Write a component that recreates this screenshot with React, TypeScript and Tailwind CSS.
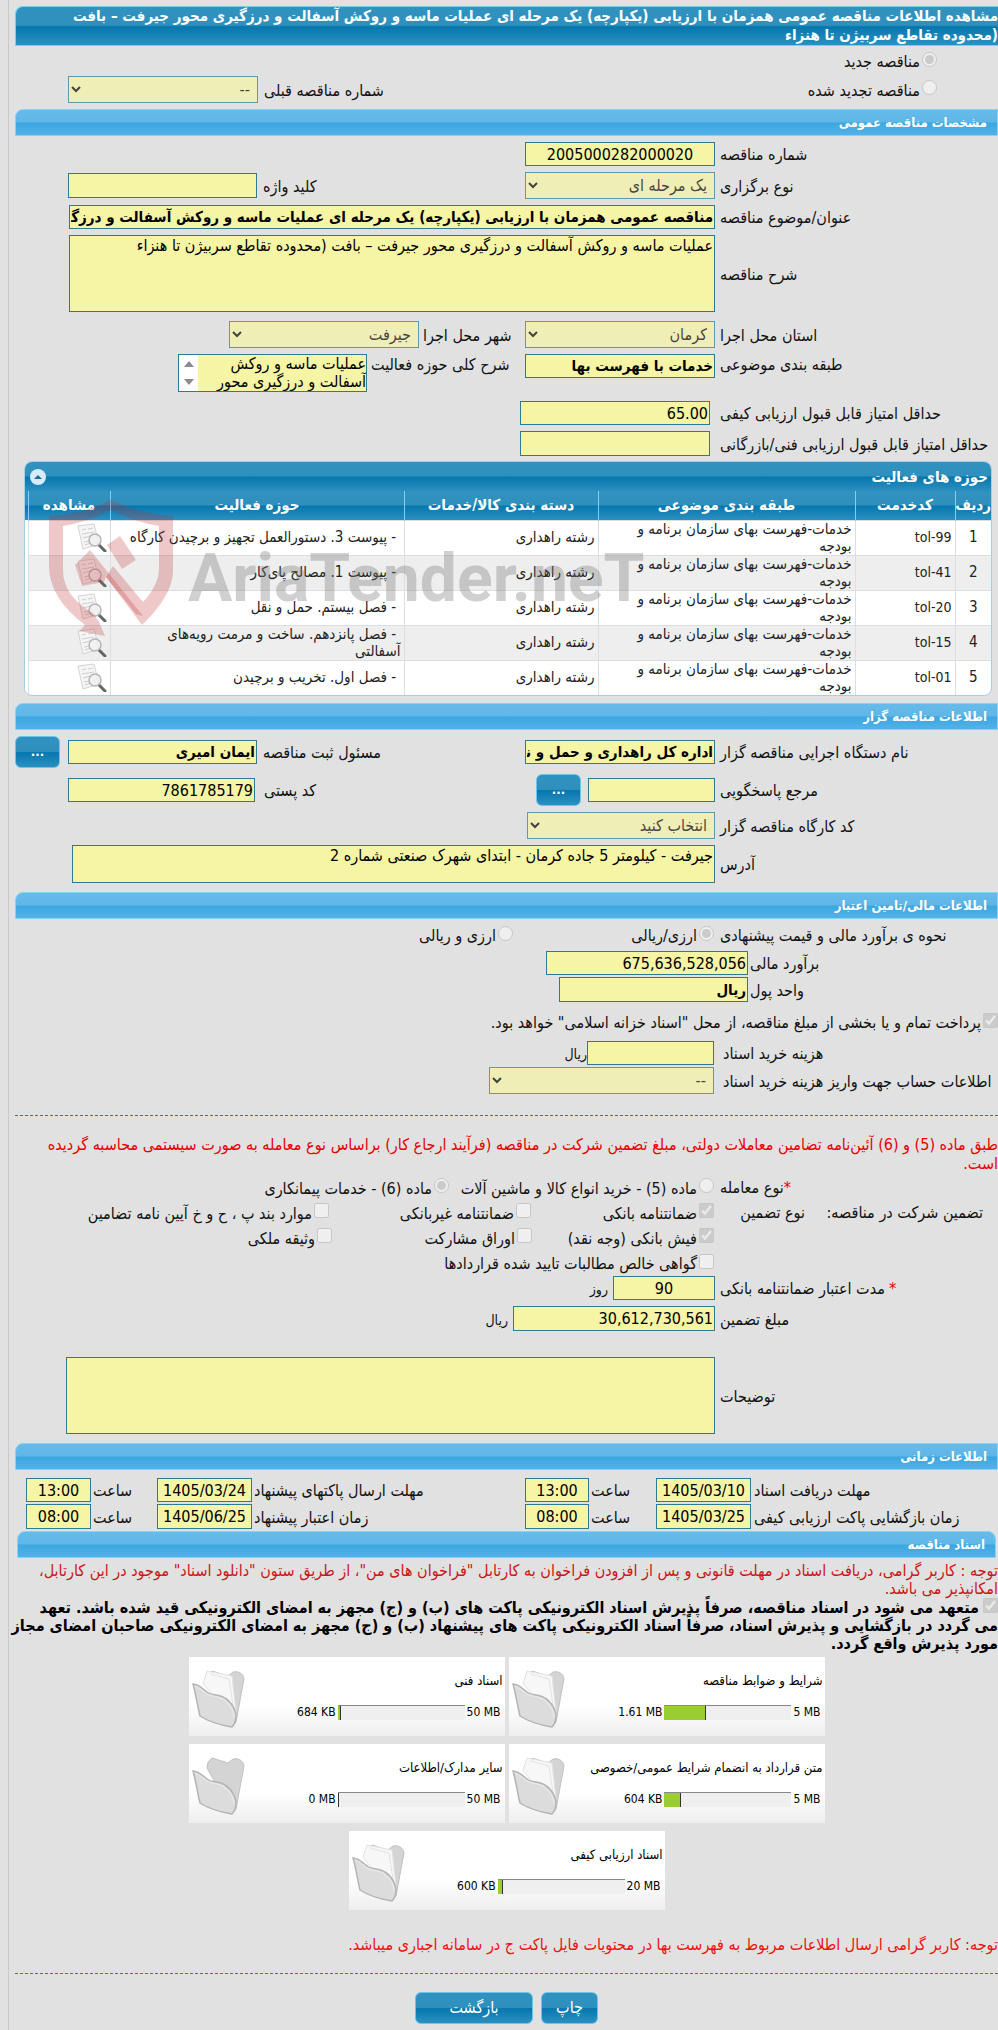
import type { ReactNode } from "react";

const fieldBox = "shrink-0 rounded-none border border-[#2c7a94] bg-[#f6f4a5] px-px leading-[20px] text-black outline-none";

const activities = [
  { code: "tol-99", title: "پیوست 3. دستورالعمل تجهیز و برچیدن کارگاه" },
  { code: "tol-41", title: "پیوست 1. مصالح پای‌کار" },
  { code: "tol-20", title: "فصل بیستم. حمل و نقل" },
  { code: "tol-15", title: "فصل پانزدهم. ساخت و مرمت رویه‌های آسفالتی" },
  { code: "tol-01", title: "فصل اول. تخریب و برچیدن" },
];

const documents = [
  { title: "شرایط و ضوابط مناقصه", used: "1.61 MB", max: "5 MB", percent: 33 },
  { title: "اسناد فنی", used: "684 KB", max: "50 MB", percent: 3 },
  { title: "متن قرارداد به انضمام شرایط عمومی/خصوصی", used: "604 KB", max: "5 MB", percent: 13 },
  { title: "سایر مدارک/اطلاعات", used: "0 MB", max: "50 MB", percent: 0 },
  { title: "اسناد ارزیابی کیفی", used: "600 KB", max: "20 MB", percent: 4 },
];

function SectionHeader({ children, className = "" }: { children: ReactNode; className?: string }) {
  return (
    <h2
      className={`h-[27px] rounded-tl-lg border border-[#86d3f5] bg-[linear-gradient(#66bbea,#5fb6e7_48%,#3ca6e0_52%,#52b2e8)] pr-[10px] text-[13px] font-bold leading-[25px] text-white ${className}`}
    >
      {children}
    </h2>
  );
}

/* Labels sit against their field, so the text is pushed to the left end */
function Label({ id, children, className = "w-[283px] pl-[5px]" }: { id: string; children: ReactNode; className?: string }) {
  return (
    <label htmlFor={id} className={`flex shrink-0 justify-end whitespace-nowrap pt-[2px] ${className}`}>
      {children}
    </label>
  );
}

function Text({ id, value = "", bold = false, className = "" }: { id: string; value?: string; bold?: boolean; className?: string }) {
  return (
    <input
      id={id}
      type="text"
      readOnly
      defaultValue={value}
      className={`${fieldBox} ${bold ? "text-[15px] font-bold" : "text-[16px]"} ${className}`}
    />
  );
}

function Select({ id, value, className = "" }: { id: string; value: string; className?: string }) {
  return (
    <select
      id={id}
      disabled
      className={`h-[27px] shrink-0 rounded-none border border-[#2c7a94] bg-[#f6f4a5] px-[3px] text-[16px] text-black opacity-70 ${className}`}
    >
      <option>{value}</option>
    </select>
  );
}

function Choice({
  type,
  name,
  label,
  checked = false,
  className = "",
}: {
  type: "radio" | "checkbox";
  name: string;
  label: string;
  checked?: boolean;
  className?: string;
}) {
  return (
    <label className={`flex shrink-0 items-center gap-[2px] whitespace-nowrap pt-[2px] ${className}`}>
      <input type={type} name={name} defaultChecked={checked} disabled className="mb-[6px] size-[15px] shrink-0" />
      {label}
    </label>
  );
}

function DotsButton({ label, className = "" }: { label: string; className?: string }) {
  return (
    <button
      type="button"
      aria-label={label}
      className={`h-[32px] w-[45px] shrink-0 rounded-md border border-[#6cc4ec] bg-[linear-gradient(#3292bf,#3090bd_48%,#0577ae_52%,#2c90c0)] text-[13px] font-bold text-white ${className}`}
    >
      ...
    </button>
  );
}

function ViewIcon() {
  return (
    <svg viewBox="0 0 30 29" className="h-[29px] w-[30px]">
      <path d="M1 3 17 1l5 20-16 5Z" fill="#f5f5f5" stroke="#d4d4d4" />
      <path d="m5 7 4-1m2 0 5-1M5 11l12-2M6 15l7-2M7 19l5-1M8 22l6-2" stroke="#cfcfcf" strokeWidth="1.2" />
      <path d="m22 22 6 6" stroke="#666" strokeWidth="3" strokeLinecap="round" />
      <circle cx="18" cy="17" r="6" fill="#f0f0f0" fillOpacity=".8" stroke="#b5b5b5" strokeWidth="1.5" />
    </svg>
  );
}

function FolderIcon({ empty }: { empty: boolean }) {
  return (
    <svg viewBox="0 0 54 60" className="h-[60px] w-[54px]">
      <path d="m15 12 1-6 4-4 16 5 5-4c5-1 10 1 11 7L44 53l-4 4Z" fill="#d4d4d4" stroke="#c2c2c2" />
      {!empty && (
        <>
          <path d="m11 14 4-12 25 5 4 36-6 6Z" fill="#f7f7f7" stroke="#e2e2e2" />
          <path d="m18 5 19 5 5 33" fill="none" stroke="#e3e3e3" />
        </>
      )}
      <path
        d="M1 15c5 0 9 4 14 8 5 4 12 2 18 6 8 5 11 14 11 18 0 4-1 8-4 11-12-2-23-5-32-11C5 35 4 25 1 15Z"
        fill="#dcdcdc"
        stroke="#b4b4b4"
        strokeWidth="1.5"
      />
      <path d="M3 17c5 2 8 5 12 8 5 3 12 2 17 6 7 5 10 12 10 17" fill="none" stroke="#ededed" />
    </svg>
  );
}

function Watermark() {
  return (
    <div className="pointer-events-none absolute left-[24px] top-[38px]" dir="ltr" aria-hidden="true">
      <svg viewBox="0 0 610 140" className="h-[140px] w-[610px]">
        <g fill="#c1272d" fillOpacity=".25">
          <path
            fillRule="evenodd"
            d="M0 16Q34 14 62 0 90 14 124 16V72Q123 96 93 125L57 77 64 66 94 102Q110 85 110 68V26Q86 22 62 10 38 22 14 26V70Q14 96 44 113L50 122 56 136 30 131 36 125Q0 98 0 66Z"
          />
          <path d="m58 45 13-9 16 24-14 9Z" />
          <path d="m41 50 53 66-7-2-30-37-2 5-22 4-7-21Z" />
        </g>
        <text x="139" y="101" fontFamily="Roboto" fontWeight="700" fontSize="66" fill="#777" fillOpacity=".35">
          AriaTender.neT
        </text>
      </svg>
    </div>
  );
}

function ActivityTable() {
  const head = "border-l border-[#7fd0f5] p-0 text-[15px] font-bold";
  const cell = "border-l border-t border-[#d9dfe2] px-[3px] py-0";
  return (
    <div className="relative ml-[9px] mr-[6px] mt-[5px] overflow-hidden rounded-lg border border-[#a5cfe4] bg-white">
      <div className="flex h-[29px] items-center justify-between bg-[linear-gradient(#3292bf,#3090bd_48%,#0577ae_52%,#2c90c0)] pl-[5px] pr-[3px] text-[15px] font-bold text-white">
        <h3>حوزه های فعالیت</h3>
        <button type="button" aria-label="بستن" className="flex size-[16px] items-center justify-center rounded-full bg-[#d8ebfa]">
          <svg viewBox="0 0 8 4" className="h-1 w-2">
            <path d="M0 4 4 0l4 4Z" fill="#1b6c9c" />
          </svg>
        </button>
      </div>
      <table className="w-full table-fixed border-collapse text-[15px] leading-[17px] text-[#222]">
        <thead>
          <tr className="h-[29px] bg-[linear-gradient(#3292bf,#3090bd_48%,#0577ae_52%,#2c90c0)] text-white">
            <th className={`w-[36px] ${head}`}>ردیف</th>
            <th className={`w-[100px] ${head}`}>کدخدمت</th>
            <th className={`w-[257px] ${head}`}>طبقه بندی موضوعی</th>
            <th className={`w-[194px] ${head}`}>دسته بندی کالا/خدمات</th>
            <th className={head}>حوزه فعالیت</th>
            <th className={`w-[82px] ${head}`}>مشاهده</th>
            <th className="w-[3px] p-0" />
          </tr>
        </thead>
        <tbody>
          {activities.map((row, i) => (
            <tr key={row.code} className="h-[35px] even:bg-[#eee]">
              <td className={`text-center ${cell}`}>{i + 1}</td>
              <td className={`text-right text-[14px] ${cell}`}>
                <bdi>{row.code}</bdi>
              </td>
              <td className={`whitespace-nowrap ${cell}`}>
                خدمات-فهرست بهای سازمان برنامه و
                <br />
                بودجه
              </td>
              <td className={cell}>رشته راهداری</td>
              <td className="border-l border-t border-[#d9dfe2] py-0 pl-[12px] pr-[3px]">
                {"\u00a0- "}
                {row.title}
              </td>
              <td className={cell}>
                <ViewIcon />
              </td>
              <td className="bg-white p-0" />
            </tr>
          ))}
        </tbody>
      </table>
      <Watermark />
    </div>
  );
}

function DocumentCard({ title, used, max, percent }: (typeof documents)[number]) {
  return (
    <div className="flex h-[79px] w-[316px] bg-[linear-gradient(#fff_60%,#eee)]">
      <div className="flex flex-1 flex-col pr-[2px] pt-[14px] text-black">
        <p className="whitespace-nowrap text-[13px] leading-[20px]">{title}</p>
        <div className="mt-[12px] flex items-center gap-[2px] pr-[2px] text-[12px] leading-[18px]">
          <bdi>{max}</bdi>
          <div className="h-[15px] w-[127px] border-t border-[#888] bg-[#efefef]" dir="ltr">
            <div className="h-full border-r border-[#333] bg-[#9acd32]" style={{ width: `${percent}%` }} />
          </div>
          <bdi>{used}</bdi>
        </div>
      </div>
      <div className="pl-[3px] pt-[12px]">
        <FolderIcon empty={percent === 0} />
      </div>
    </div>
  );
}

export default function App() {
  return (
    <div dir="rtl" lang="fa" className="overflow-hidden bg-[#e1e1e1] font-['DejaVu_Sans_Condensed','DejaVu_Sans',sans-serif] text-[16px] leading-[18px] text-[#111]">
      <main className="ml-2 border-l border-[#c9c9c9] pb-[6px] pl-[6px] pt-[6px]">
        <h1 className="h-[40px] whitespace-nowrap rounded-tl-lg border border-r-0 border-[#7ccdf0] bg-[linear-gradient(#3292bf,#3090bd_48%,#0577ae_52%,#2c90c0)] text-[15px] font-bold leading-[19px] text-white">
          مشاهده اطلاعات مناقصه عمومی همزمان با ارزیابی (یکپارچه) یک مرحله ای عملیات ماسه و روکش آسفالت و درزگیری محور جیرفت – بافت
          <br />
          (محدوده تقاطع سربیژن تا هنزاء
        </h1>

        <div className="flex h-[30px] items-center pr-[61px]">
          <Choice type="radio" name="kind" label="مناقصه جدید" checked />
        </div>
        <div className="flex h-[27px] items-center pr-[61px]">
          <Choice type="radio" name="kind" label="مناقصه تجدید شده" className="w-[412px]" />
          <Label id="previous" className="w-[267px] pl-[6px]">شماره مناقصه قبلی</Label>
          <Select id="previous" value="--" className="w-[190px]" />
        </div>

        <SectionHeader className="mt-[6px]">مشخصات مناقصه عمومی</SectionHeader>
        <div className="mt-[6px] flex items-center">
          <Label id="number">شماره مناقصه</Label>
          <Text id="number" value="2005000282000020" className="h-[24px] w-[190px] text-center" />
        </div>
        <div className="mt-[6px] flex items-center">
          <Label id="stage">نوع برگزاری</Label>
          <Select id="stage" value="یک مرحله ای" className="w-[190px]" />
          <Label id="keyword" className="w-[268px] pl-[6px]">کلید واژه</Label>
          <Text id="keyword" className="h-[25px] w-[189px]" />
        </div>
        <div className="mt-[6px] flex items-center">
          <Label id="subject">عنوان/موضوع مناقصه</Label>
          <Text
            id="subject"
            bold
            value="مناقصه عمومی همزمان با ارزیابی (یکپارچه) یک مرحله ای عملیات ماسه و روکش آسفالت و درزگیری محور جیرفت"
            className="h-[24px] w-[646px]"
          />
        </div>
        <div className="mt-[6px] flex items-center">
          <Label id="description">شرح مناقصه</Label>
          <textarea
            id="description"
            readOnly
            defaultValue="عملیات ماسه و روکش آسفالت و درزگیری محور جیرفت – بافت (محدوده تقاطع سربیژن تا هنزاء"
            className={`h-[77px] w-[646px] resize-none ${fieldBox}`}
          />
        </div>
        <div className="mt-[9px] flex items-center">
          <Label id="province">استان محل اجرا</Label>
          <Select id="province" value="کرمان" className="w-[190px]" />
          <Label id="city" className="w-[106px] pl-[4px]">شهر محل اجرا</Label>
          <Select id="city" value="جیرفت" className="w-[190px]" />
        </div>
        <div className="mt-[6px] flex items-start">
          <Label id="category">طبقه بندی موضوعی</Label>
          <Text id="category" bold value="خدمات با فهرست بها" className="h-[24px] w-[190px]" />
          <Label id="scope" className="w-[158px] pl-[4px]">شرح کلی حوزه فعالیت</Label>
          <div className="flex h-[38px] w-[189px] border border-[#2c7a94] bg-[#f6f4a5]">
            <textarea
              id="scope"
              readOnly
              defaultValue="عملیات ماسه و روکش آسفالت و درزگیری محور جیرفت – بافت"
              className="h-full min-w-0 flex-1 resize-none overflow-hidden leading-[18px] text-black outline-none"
            />
            <div className="flex w-[19px] flex-col items-center justify-between bg-white py-[6px]">
              <svg viewBox="0 0 10 6" className="h-[6px] w-[10px]">
                <path d="M0 6 5 0l5 6Z" fill="#8b8b8b" />
              </svg>
              <svg viewBox="0 0 10 6" className="h-[6px] w-[10px]">
                <path d="M0 0h10L5 6Z" fill="#8b8b8b" />
              </svg>
            </div>
          </div>
        </div>
        <div className="mt-[9px] flex items-center">
          <Label id="quality" className="w-[288px] pl-[10px]">حداقل امتیاز قابل قبول ارزیابی کیفی</Label>
          <Text id="quality" value="65.00" className="h-[24px] w-[190px]" />
        </div>
        <div className="mt-[6px] flex items-center">
          <Label id="technical" className="w-[288px] pl-[10px]">حداقل امتیاز قابل قبول ارزیابی فنی/بازرگانی</Label>
          <Text id="technical" className="h-[25px] w-[190px]" />
        </div>

        <ActivityTable />

        <SectionHeader className="mt-[7px]">اطلاعات مناقصه گزار</SectionHeader>
        <div className="mt-[6px] flex items-center">
          <Label id="agency">نام دستگاه اجرایی مناقصه گزار</Label>
          <Text id="agency" bold value="اداره کل راهداری و حمل و نقل جاده ای جنوب کرمان" className="h-[24px] w-[190px]" />
          <Label id="registrar" className="w-[268px] pl-[6px]">مسئول ثبت مناقصه</Label>
          <Text id="registrar" bold value="ایمان امیری" className="h-[24px] w-[189px]" />
          <DotsButton label="انتخاب مسئول" className="mr-[8px]" />
        </div>
        <div className="mt-[6px] flex items-center">
          <Label id="authority">مرجع پاسخگویی</Label>
          <Text id="authority" className="h-[24px] w-[127px]" />
          <DotsButton label="انتخاب مرجع" className="mr-[7px]" />
          <Label id="postal" className="w-[281px] pl-[9px]">کد پستی</Label>
          <Text id="postal" value="7861785179" className="h-[24px] w-[187px]" />
        </div>
        <div className="mt-[6px] flex items-center">
          <Label id="workshop">کد کارگاه مناقصه گزار</Label>
          <Select id="workshop" value="انتخاب کنید" className="w-[188px]" />
        </div>
        <div className="mt-[6px] flex items-center">
          <Label id="address">آدرس</Label>
          <textarea
            id="address"
            readOnly
            defaultValue="جیرفت - کیلومتر 5 جاده کرمان - ابتدای شهرک صنعتی شماره 2"
            className={`h-[38px] w-[643px] resize-none ${fieldBox}`}
          />
        </div>

        <SectionHeader className="mt-[9px]">اطلاعات مالی/تامین اعتبار</SectionHeader>
        <div className="flex h-[32px] items-center">
          <span className="flex w-[284px] shrink-0 justify-end whitespace-nowrap pl-[6px] pt-[2px]">نحوه ی برآورد مالی و قیمت پیشنهادی</span>
          <Choice type="radio" name="currency" label="ارزی/ریالی" checked className="w-[201px]" />
          <Choice type="radio" name="currency" label="ارزی و ریالی" />
        </div>
        <div className="flex items-center">
          <Label id="estimate" className="w-[250px] pl-[2px]">برآورد مالی</Label>
          <Text id="estimate" value="675,636,528,056" className="h-[24px] w-[202px]" />
        </div>
        <div className="mt-[2px] flex items-center">
          <Label id="unit" className="w-[250px] pl-[2px]">واحد پول</Label>
          <Text id="unit" bold value="ریال" className="h-[25px] w-[189px]" />
        </div>
        <div className="mt-[10px] flex h-[20px] items-center">
          <Choice type="checkbox" name="treasury" label={'پرداخت تمام و یا بخشی از مبلغ مناقصه، از محل "اسناد خزانه اسلامی" خواهد بود.'} checked />
        </div>
        <div className="mt-[9px] flex items-center">
          <Label id="fee" className="w-[284px] pl-[9px]">هزینه خرید اسناد</Label>
          <Text id="fee" className="h-[24px] w-[127px]" />
          <span className="pt-[2px] text-[14px]">ریال</span>
        </div>
        <div className="mt-[2px] flex items-center">
          <Label id="account" className="w-[284px] pl-[9px]">اطلاعات حساب جهت واریز هزینه خرید اسناد</Label>
          <Select id="account" value="--" className="w-[225px]" />
        </div>

        <hr className="mt-[21px] border-dashed border-[#1d7cb0]" />
        <p className="mt-[19px] whitespace-nowrap leading-[19px] text-[#e60000]">
          طبق ماده (5) و (6) آئین‌نامه تضامین معاملات دولتی، مبلغ تضمین شرکت در مناقصه (فرآیند ارجاع کار) براساس نوع معامله به صورت سیستمی محاسبه گردیده
          <br />
          است.
        </p>
        <div className="mt-[2px] flex h-[25px] items-center">
          <span className="flex w-[284px] shrink-0 justify-end pl-[6px]">
            <span className="text-[#e60000]">*</span>نوع معامله
          </span>
          <Choice type="radio" name="deal" label="ماده (5) - خرید انواع کالا و ماشین آلات" className="w-[265px]" />
          <Choice type="radio" name="deal" label="ماده (6) - خدمات پیمانکاری" checked />
        </div>
        <div className="flex h-[25px] items-center pr-[15px]">
          <span className="w-[178px] shrink-0">تضمین شرکت در مناقصه:</span>
          <span className="w-[91px] shrink-0">نوع تضمین</span>
          <Choice type="checkbox" name="bank" label="ضمانتنامه بانکی" checked className="w-[183px]" />
          <Choice type="checkbox" name="nonbank" label="ضمانتنامه غیربانکی" className="w-[202px]" />
          <Choice type="checkbox" name="clause" label="موارد بند پ ، ح و خ آیین نامه تضامین" />
        </div>
        <div className="flex h-[25px] items-center pr-[284px]">
          <Choice type="checkbox" name="cash" label="فیش بانکی (وجه نقد)" checked className="w-[182px]" />
          <Choice type="checkbox" name="bonds" label="اوراق مشارکت" className="w-[200px]" />
          <Choice type="checkbox" name="estate" label="وثیقه ملکی" />
        </div>
        <div className="flex h-[26px] items-center pr-[284px]">
          <Choice type="checkbox" name="claims" label="گواهی خالص مطالبات تایید شده قراردادها" />
        </div>
        <div className="flex items-center">
          <Label id="validity">
            <span className="ml-1 text-[#e60000]">*</span>مدت اعتبار ضمانتنامه بانکی
          </Label>
          <Text id="validity" value="90" className="ml-[5px] h-[24px] w-[102px] text-center" />
          <span className="pt-[2px] text-[14px]">روز</span>
        </div>
        <div className="mt-[6px] flex items-center">
          <Label id="guarantee">مبلغ تضمین</Label>
          <Text id="guarantee" value="30,612,730,561" className="ml-[5px] h-[25px] w-[202px]" />
          <span className="pt-[2px] text-[14px]">ریال</span>
        </div>
        <div className="mt-[26px] flex items-center">
          <Label id="notes">توضیحات</Label>
          <textarea id="notes" readOnly className={`h-[77px] w-[649px] resize-none ${fieldBox}`} />
        </div>

        <SectionHeader className="mt-[9px]">اطلاعات زمانی</SectionHeader>
        <div className="mt-[8px] flex items-center">
          <Label id="docs-date" className="w-[247px] pl-[3px]">مهلت دریافت اسناد</Label>
          <Text id="docs-date" value="1405/03/10" className="h-[24px] w-[95px] text-center" />
          <Label id="docs-time" className="w-[67px] pl-[2px]">ساعت</Label>
          <Text id="docs-time" value="13:00" className="h-[24px] w-[64px] text-center" />
          <Label id="send-date" className="w-[273px] pl-[2px]">مهلت ارسال پاکتهای پیشنهاد</Label>
          <Text id="send-date" value="1405/03/24" className="h-[24px] w-[95px] text-center" />
          <Label id="send-time" className="w-[66px] pl-[2px]">ساعت</Label>
          <Text id="send-time" value="13:00" className="h-[24px] w-[65px] text-center" />
        </div>
        <div className="mt-[2px] flex items-center">
          <Label id="open-date" className="w-[247px] pl-[3px]">زمان بازگشایی پاکت ارزیابی کیفی</Label>
          <Text id="open-date" value="1405/03/25" className="h-[25px] w-[95px] text-center" />
          <Label id="open-time" className="w-[67px] pl-[2px]">ساعت</Label>
          <Text id="open-time" value="08:00" className="h-[25px] w-[64px] text-center" />
          <Label id="valid-date" className="w-[273px] pl-[2px]">زمان اعتبار پیشنهاد</Label>
          <Text id="valid-date" value="1405/06/25" className="h-[25px] w-[95px] text-center" />
          <Label id="valid-time" className="w-[66px] pl-[2px]">ساعت</Label>
          <Text id="valid-time" value="08:00" className="h-[25px] w-[65px] text-center" />
        </div>

        <SectionHeader className="ml-[2px] mr-[2px] mt-[2px] rounded-tr-lg">اسناد مناقصه</SectionHeader>
        <p className="mt-[4px] whitespace-nowrap leading-[18px] text-[#cc1414]">
          توجه : کاربر گرامی، دریافت اسناد در مهلت قانونی و پس از افزودن فراخوان به کارتابل "فراخوان های من"، از طریق ستون "دانلود اسناد" موجود در این کارتابل،
          <br />
          امکانپذیر می باشد.
        </p>
        <label className="block whitespace-nowrap font-bold leading-[18px] text-black">
          <input type="checkbox" defaultChecked disabled className="ml-1 size-[15px]" />
          متعهد می شود در اسناد مناقصه، صرفاً پذیرش اسناد الکترونیکی پاکت های (ب) و (ج) مجهز به امضای الکترونیکی قید شده باشد. تعهد
          <br />
          می گردد در بازگشایی و پذیرش اسناد، صرفاً اسناد الکترونیکی پاکت های پیشنهاد (ب) و (ج) مجهز به امضای الکترونیکی صاحبان امضای مجاز
          <br />
          مورد پذیرش واقع گردد.
        </label>

        <div className="mx-auto mt-[4px] flex w-[636px] flex-wrap justify-center gap-x-[4px] gap-y-[8px]">
          {documents.map((doc) => (
            <DocumentCard key={doc.title} {...doc} />
          ))}
        </div>

        <p className="mt-[26px] whitespace-nowrap text-[#f01010]">
          توجه: کاربر گرامی ارسال اطلاعات مربوط به فهرست بها در محتویات فایل پاکت ج در سامانه اجباری میباشد.
        </p>
        <hr className="mt-[19px] border-dashed border-[#1d7cb0]" />
        <div className="mt-[18px] flex justify-center gap-[8px] text-white">
          <button type="button" className="h-[32px] w-[57px] rounded-md border border-[#6cc4ec] bg-[linear-gradient(#3292bf,#3090bd_48%,#0577ae_52%,#2c90c0)]">
            چاپ
          </button>
          <button type="button" className="h-[32px] w-[118px] rounded-md border border-[#6cc4ec] bg-[linear-gradient(#3292bf,#3090bd_48%,#0577ae_52%,#2c90c0)]">
            بازگشت
          </button>
        </div>
      </main>
    </div>
  );
}
